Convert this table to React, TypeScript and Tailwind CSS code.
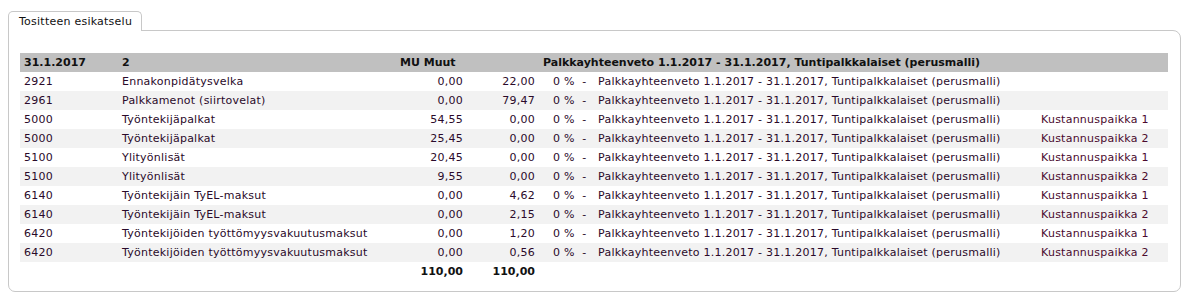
const rows: [string, string, string, string, string][] = [
  ['2921', 'Ennakonpidätysvelka', '0,00', '22,00', ''],
  ['2961', 'Palkkamenot (siirtovelat)', '0,00', '79,47', ''],
  ['5000', 'Työntekijäpalkat', '54,55', '0,00', 'Kustannuspaikka 1'],
  ['5000', 'Työntekijäpalkat', '25,45', '0,00', 'Kustannuspaikka 2'],
  ['5100', 'Ylityönlisät', '20,45', '0,00', 'Kustannuspaikka 1'],
  ['5100', 'Ylityönlisät', '9,55', '0,00', 'Kustannuspaikka 2'],
  ['6140', 'Työntekijäin TyEL-maksut', '0,00', '4,62', 'Kustannuspaikka 1'],
  ['6140', 'Työntekijäin TyEL-maksut', '0,00', '2,15', 'Kustannuspaikka 2'],
  ['6420', 'Työntekijöiden työttömyysvakuutusmaksut', '0,00', '1,20', 'Kustannuspaikka 1'],
  ['6420', 'Työntekijöiden työttömyysvakuutusmaksut', '0,00', '0,56', 'Kustannuspaikka 2'],
];

const desc = 'Palkkayhteenveto 1.1.2017 - 31.1.2017, Tuntipalkkalaiset (perusmalli)';

export default function App() {
  return (
    <div
      className="w-[1195px] h-[302px] bg-white pl-2 pt-[11px] pr-[14px] text-[11px] tracking-[0.24px] text-[#2a0a2a]"
      style={{ fontFamily: '"DejaVu Sans", Verdana, sans-serif' }}
    >
      {/* tab */}
      <div className="relative z-10 -mb-px flex h-[20px] w-[134px] items-center rounded-t-[5px] border border-b-0 border-[#c8c8c8] bg-white pl-[10px] pt-[2px] text-[#111]">
        Tositteen esikatselu
      </div>

      {/* panel */}
      <div className="rounded-tr-[8px] rounded-b-[7px] border border-[#c8c8c8] px-[11px] pt-[22px] pb-[10px]">
        <table className="w-[1148px] table-fixed border-collapse">
          <colgroup>
            <col className="w-[98px]" />
            <col className="w-[278px]" />
            <col className="w-[71px]" />
            <col className="w-[72px]" />
            <col className="w-[55px]" />
            <col className="w-[443px]" />
            <col className="w-[131px]" />
          </colgroup>
          <thead>
            <tr className="h-[19px] bg-[#c0c0c0] font-bold tracking-normal text-[#111]">
              <td className="px-1 pt-px whitespace-nowrap">31.1.2017</td>
              <td className="px-1 pt-px">2</td>
              <td className="px-1 pt-px whitespace-nowrap" colSpan={2}>MU Muut</td>
              <td className="px-1 pt-px whitespace-nowrap" colSpan={3}>{desc}</td>
            </tr>
          </thead>
          <tbody>
            {rows.map((r, i) => (
              <tr key={i} className={i % 2 === 1 ? 'h-[19px] bg-[#f2f2f2]' : 'h-[19px]'}>
                <td className="px-1 pt-px">{r[0]}</td>
                <td className="px-1 pt-px whitespace-nowrap">{r[1]}</td>
                <td className="px-1 pt-px text-right">{r[2]}</td>
                <td className="px-1 pt-px text-right">{r[3]}</td>
                <td className="pl-[14px] pt-px whitespace-nowrap">0 %&nbsp; -</td>
                <td className="px-1 pt-px whitespace-nowrap">{desc}</td>
                <td className="px-1 pt-px whitespace-nowrap text-[#4a0a2e]">{r[4]}</td>
              </tr>
            ))}
            <tr className="h-[19px] font-bold tracking-normal text-[#111]">
              <td />
              <td />
              <td className="px-1 pt-px text-right">110,00</td>
              <td className="px-1 pt-px text-right">110,00</td>
              <td />
              <td />
              <td />
            </tr>
          </tbody>
        </table>
      </div>
    </div>
  );
}
